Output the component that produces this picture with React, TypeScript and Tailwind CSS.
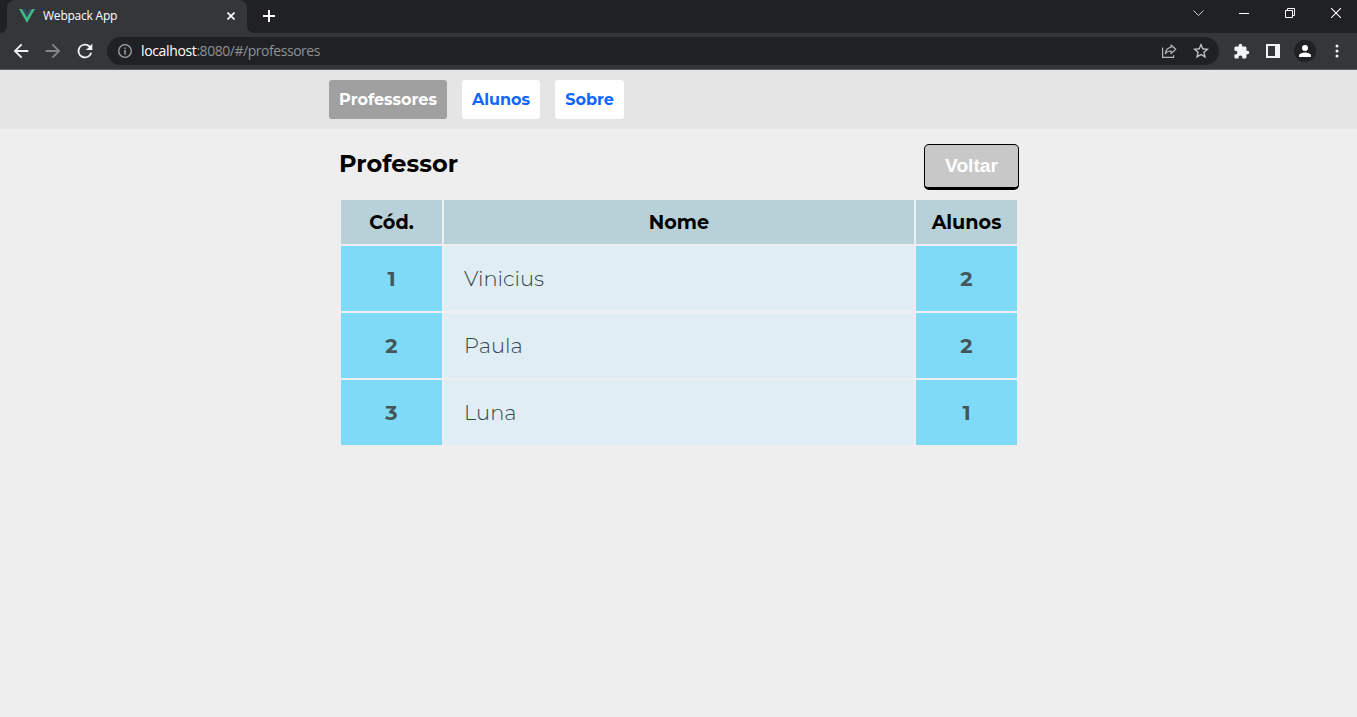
import React from "react";

const teachers = [
  { id: 1, name: "Vinicius", students: 2 },
  { id: 2, name: "Paula", students: 2 },
  { id: 3, name: "Luna", students: 1 },
];

function VueLogo() {
  return (
    <svg className="ml-3 h-[14px] w-4" viewBox="0 0 16 14">
      <path d="M0 0h3.2L8 8.3 12.8 0H16L8 14z" fill="#41b883" />
      <path d="M3.2 0h3L8 3.1 9.8 0h3L8 8.3z" fill="#35495e" />
    </svg>
  );
}

function TabStrip() {
  return (
    <div className="flex h-[33px] bg-[#202124] pr-4">
      <svg className="h-[33px] w-[7px] shrink-0" viewBox="0 0 7 33">
        <path d="M7 26v7H0a7 7 0 0 0 7-7z" fill="#35363a" />
      </svg>
      <div className="flex h-[33px] w-60 items-center rounded-t-lg bg-[#35363a] pb-[2px]">
        <VueLogo />
        <span className="ml-2 w-[184px] whitespace-nowrap font-['Open_Sans',sans-serif] text-[12px] leading-4 tracking-[-0.22px] text-white">
          Webpack App
        </span>
        <svg className="h-2 w-2" viewBox="0 0 8 8" stroke="#fff" strokeWidth="1.6">
          <path d="M.5.5l7 7M7.5.5l-7 7" />
        </svg>
      </div>
      <svg className="h-[33px] w-[7px] shrink-0" viewBox="0 0 7 33">
        <path d="M0 26v7h7a7 7 0 0 1-7-7z" fill="#35363a" />
      </svg>
      <svg className="ml-[9px] mt-[10px] h-3 w-3" viewBox="0 0 12 12" stroke="#fff" strokeWidth="2">
        <path d="M6 0v12M0 6h12" />
      </svg>
      <div className="ml-auto flex h-[26px] items-center">
        <svg className="h-[6px] w-[11px]" viewBox="0 0 11 6" fill="none" stroke="#d0d0d1" strokeWidth="1">
          <path d="M.5.5l5 5 5-5" />
        </svg>
        <svg className="ml-[35px] h-[10px] w-[10px]" viewBox="0 0 10 10" stroke="#fff">
          <path d="M0 5.5h10" />
        </svg>
        <svg className="ml-9 h-[10px] w-[10px]" viewBox="0 0 10 10" fill="none" stroke="#fff">
          <path d="M.5 2.5h7v7h-7zM2.5 2.5v-2h7v7h-2" />
        </svg>
        <svg className="ml-9 h-[10px] w-[10px]" viewBox="0 0 10 10" stroke="#fff" strokeWidth="1.1">
          <path d="M0 0l10 10M10 0L0 10" />
        </svg>
      </div>
    </div>
  );
}

function Toolbar() {
  return (
    <div className="flex h-[37px] items-center border-b border-[#5b5c5f] bg-[#35363a] pl-[10px] pr-[10px]">
      <svg className="h-[22px] w-[22px]" viewBox="0 0 24 24" fill="#f1f3f4">
        <path d="M20 11H7.83l5.59-5.59L12 4l-8 8 8 8 1.41-1.41L7.83 13H20z" />
      </svg>
      <svg className="ml-[10px] h-[22px] w-[22px]" viewBox="0 0 24 24" fill="#85868a">
        <path d="M12 4l-1.41 1.41L16.17 11H4v2h12.17l-5.58 5.59L12 20l8-8z" />
      </svg>
      <svg className="ml-[10px] h-[22px] w-[22px]" viewBox="0 0 24 24" fill="#f1f3f4">
        <path d="M17.65 6.35A8 8 0 1 0 19.73 14h-2.08A6 6 0 1 1 12 6c1.66 0 3.14.69 4.22 1.78L13 11h7V4z" />
      </svg>
      <div className="ml-[11px] flex h-7 w-[1112px] items-center rounded-full bg-[#202124] pl-[11px] pr-[10px]">
        <svg className="h-[14px] w-[14px]" viewBox="0 0 14 14" fill="none" stroke="#a0a4a8">
          <circle cx="7" cy="7" r="6.3" strokeWidth="1.3" />
          <path d="M7 6v4.5M7 3.5V5" strokeWidth="1.5" />
        </svg>
        <div className="ml-[9px] whitespace-nowrap font-['Open_Sans',sans-serif] text-[14px] leading-5 tracking-[-0.46px] text-[#8f9295]">
          <span className="tracking-[-0.36px] text-white">localhost</span>:8080/#/professores
        </div>
        <svg className="ml-auto h-4 w-4" viewBox="0 0 16 16" fill="none" stroke="#b4b6b9" strokeWidth="1.2">
          <path d="M1.6 4.5v9.9h11v-2.2" />
          <path d="M10 2l4.8 4.3L10 10.5V8c-2.7 0-4.4.7-5.7 2.7C4.7 7.4 6.5 4.9 10 4.4z" strokeLinejoin="round" />
        </svg>
        <svg className="ml-4 h-4 w-4" viewBox="2 2 20 20" fill="#c6c8ca">
          <path d="M22 9.24l-7.19-.62L12 2 9.19 8.63 2 9.24l5.46 4.73L5.82 21 12 17.27 18.18 21l-1.63-7.03L22 9.24zM12 15.4l-3.76 2.27 1-4.28-3.32-2.88 4.38-.38L12 6.1l1.71 4.04 4.38.38-3.32 2.88 1 4.28L12 15.4z" />
        </svg>
      </div>
      <svg className="ml-[14px] h-[17px] w-[17px]" viewBox="0 0 24 24" fill="#f1f3f4">
        <path d="M20.5 11H19V7c0-1.1-.9-2-2-2h-4V3.5a2.5 2.5 0 0 0-5 0V5H4c-1.1 0-2 .9-2 2v3.8h1.5a2.7 2.7 0 0 1 0 5.4H2V20c0 1.1.9 2 2 2h3.8v-1.5a2.7 2.7 0 0 1 5.4 0V22H17c1.1 0 2-.9 2-2v-4h1.5a2.5 2.5 0 0 0 0-5z" />
      </svg>
      <svg className="ml-4 h-[14px] w-[14px]" viewBox="0 0 14 14">
        <path d="M0 0h14v14H0zM2 2v10h7V2z" fill="#f1f3f4" fillRule="evenodd" />
      </svg>
      <svg className="ml-[14px] h-[22px] w-[22px]" viewBox="0 0 22 22">
        <circle cx="11" cy="11" r="11" fill="#202124" />
        <circle cx="11" cy="8" r="3" fill="#fff" />
        <path d="M5 17v-1.5C5 13.4 9 12.4 11 12.4s6 1 6 3.1V17z" fill="#fff" />
      </svg>
      <svg className="ml-[19px] h-[14px] w-1" viewBox="0 0 4 14" fill="#f1f3f4">
        <circle cx="2" cy="2" r="1.5" />
        <circle cx="2" cy="7" r="1.5" />
        <circle cx="2" cy="12" r="1.5" />
      </svg>
    </div>
  );
}

function Nav() {
  const base = "flex h-[39px] items-center justify-center rounded-[3px] whitespace-nowrap text-[16px] font-bold";
  return (
    <nav className="flex h-[59px] gap-[15px] bg-[#e5e5e5] pl-[329px] pt-[10px]">
      <a className={`${base} w-[118px] bg-[#a0a0a0] text-white`}>Professores</a>
      <a className={`${base} w-[78px] bg-white text-[#0d67ff]`}>Alunos</a>
      <a className={`${base} w-[69px] bg-white text-[#0d67ff]`}>Sobre</a>
    </nav>
  );
}

function TeacherTable() {
  const head = "h-11 bg-[#b8d0d7] p-0 text-center text-[19.2px] font-bold leading-6 text-black";
  const num = "h-[65px] bg-[#7fdaf7] p-0 text-center text-[20.8px] font-bold leading-6 text-[#44565a]";
  return (
    <table className="mt-[8px] w-[680px] table-fixed border-separate border-spacing-[2px]">
      <colgroup>
        <col className="w-[101px]" />
        <col className="w-[470px]" />
        <col className="w-[101px]" />
      </colgroup>
      <thead>
        <tr>
          <th className={head}>Cód.</th>
          <th className={head}>Nome</th>
          <th className={head}>Alunos</th>
        </tr>
      </thead>
      <tbody>
        {teachers.map((t) => (
          <tr key={t.id}>
            <td className={num}>{t.id}</td>
            <td className="h-[65px] bg-[#e0edf5] py-0 pl-5 pr-0 text-[21px] font-light leading-6 text-[#35474b]">
              {t.name}
            </td>
            <td className={num}>{t.students}</td>
          </tr>
        ))}
      </tbody>
    </table>
  );
}

export default function App() {
  return (
    <div className="flex h-[717px] w-[1357px] flex-col overflow-hidden bg-[#eeeeee] font-['Montserrat','Inter',sans-serif]">
      <TabStrip />
      <Toolbar />
      <Nav />
      <main className="ml-[339px] w-[680px] pt-[15px]">
        <header className="flex h-[46px] items-start justify-between">
          <h1 className="mt-1 text-[24px] font-bold leading-8 text-black">Professor</h1>
          <button className="flex h-[46px] w-[95px] items-center justify-center rounded-[5px] border border-b-[3px] border-black bg-[#c8c8c8] font-['Liberation_Sans',sans-serif] text-[19.2px] font-bold text-white">
            Voltar
          </button>
        </header>
        <TeacherTable />
      </main>
    </div>
  );
}
